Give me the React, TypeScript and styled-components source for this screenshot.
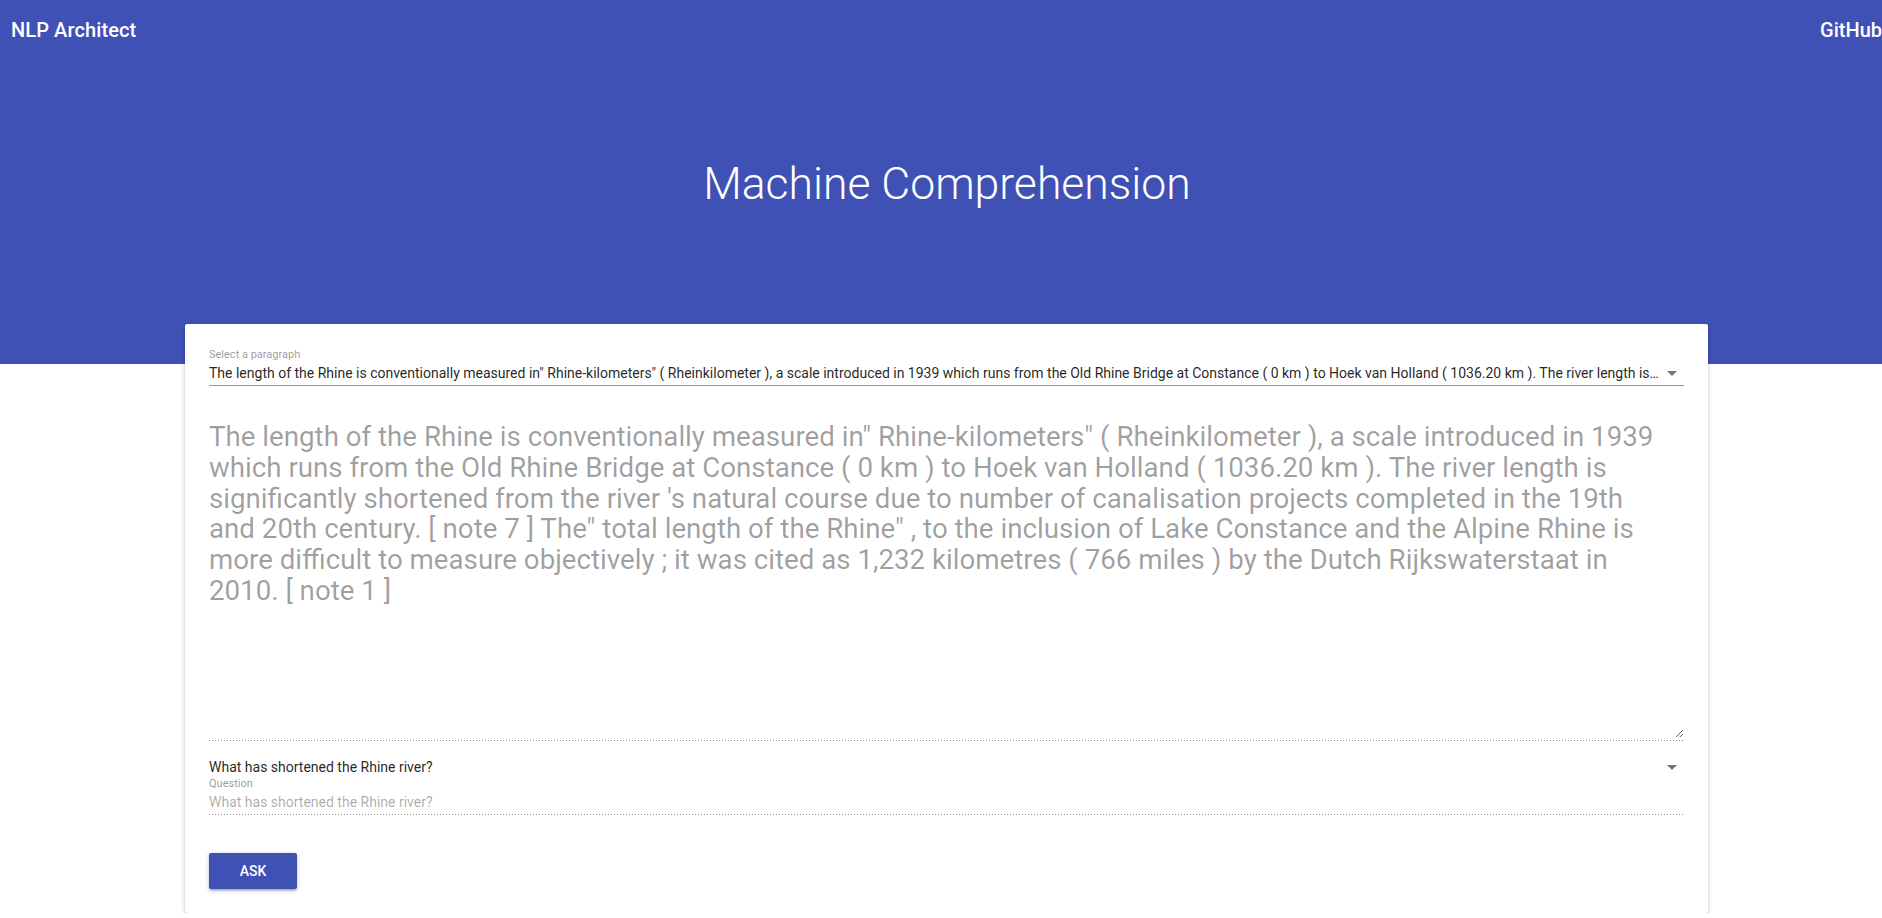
import React from "react";
import styled, { createGlobalStyle } from "styled-components";

const GlobalStyle = createGlobalStyle`
  html, body { margin: 0; padding: 0; overflow: hidden; background: #fff; }
  body { font-family: Roboto, "Noto Sans", sans-serif; }
`;

const PARAGRAPH =
  "The length of the Rhine is conventionally measured in\" Rhine-kilometers\" ( Rheinkilometer ), a scale introduced in 1939 which runs from the Old Rhine Bridge at Constance ( 0 km ) to Hoek van Holland ( 1036.20 km ). The river length is significantly shortened from the river 's natural course due to number of canalisation projects completed in the 19th and 20th century. [ note 7 ] The\" total length of the Rhine\" , to the inclusion of Lake Constance and the Alpine Rhine is more difficult to measure objectively ; it was cited as 1,232 kilometres ( 766 miles ) by the Dutch Rijkswaterstaat in 2010. [ note 1 ]";

const QUESTION = "What has shortened the Rhine river?";

const Hero = styled.header`
  background: #3f51b5;
  height: 364px;
  display: flex;
  flex-direction: column;
  color: #fff;
`;

const Toolbar = styled.div`
  height: 60px;
  display: flex;
  align-items: center;
  justify-content: space-between;
  padding-left: 11px;
`;

const Brand = styled.div`
  font-size: 20px;
  font-weight: 500;
  letter-spacing: 0.1px;
`;

const NavLink = styled.a`
  font-size: 20px;
  font-weight: 500;
  color: #fff;
  text-decoration: none;
`;

const Title = styled.h1`
  margin: 98px 0 0;
  text-align: center;
  font-size: 44.5px;
  font-weight: 300;
  line-height: 52px;
  padding-left: 12px;
`;

const Card = styled.main`
  margin: -40px 0 0 185px;
  width: 1523px;
  box-sizing: border-box;
  padding: 24px;
  background: #fff;
  border-radius: 2px;
  box-shadow: 0px 1px 5px 0px rgba(0, 0, 0, 0.2), 0px 2px 2px 0px rgba(0, 0, 0, 0.14),
    0px 3px 1px -2px rgba(0, 0, 0, 0.12);
  display: flex;
  flex-direction: column;
`;

const FieldLabel = styled.label`
  display: block;
  font-size: 11px;
  line-height: 13px;
  color: rgba(0, 0, 0, 0.42);
`;

const SelectRow = styled.div<{ $underline?: boolean }>`
  position: relative;
  height: ${(p) => (p.$underline ? "24px" : "20px")};
  display: flex;
  align-items: center;
  border-bottom: ${(p) => (p.$underline ? "1px solid rgba(0, 0, 0, 0.42)" : "none")};
`;

const SelectValue = styled.div`
  flex: 1;
  min-width: 0;
  padding-right: 24px;
  font-size: 14px;
  color: rgba(0, 0, 0, 0.87);
  white-space: nowrap;
  overflow: hidden;
  text-overflow: ellipsis;
`;

const Arrow = styled.svg`
  position: absolute;
  right: 0;
  top: 50%;
  margin-top: -12px;
  width: 24px;
  height: 24px;
  fill: rgba(0, 0, 0, 0.54);
`;

const DottedField = styled.div`
  padding-bottom: 3px;
  background-image: linear-gradient(to right, rgba(0, 0, 0, 0.42) 33%, transparent 0%);
  background-position: left bottom;
  background-size: 3px 1px;
  background-repeat: repeat-x;
`;

const TextArea = styled.textarea`
  display: block;
  width: 100%;
  height: 316px;
  margin: 36px 0 0;
  padding: 0 11px 0 0;
  border: none;
  outline: none;
  resize: vertical;
  font-family: Roboto, sans-serif;
  font-size: 27.7px;
  line-height: 30.75px;
  color: rgba(0, 0, 0, 0.38);
  background: transparent;
  box-sizing: border-box;
`;

const QuestionBlock = styled.div`
  margin-top: 16px;
  display: flex;
  flex-direction: column;
`;

const Input = styled.input`
  display: block;
  width: 100%;
  height: 21px;
  margin-top: 1px;
  padding: 0;
  border: none;
  outline: none;
  font-family: Roboto, sans-serif;
  font-size: 14px;
  background: transparent;
  &::placeholder {
    color: rgba(0, 0, 0, 0.34);
  }
`;

const AskButton = styled.button`
  margin-top: 38px;
  align-self: flex-start;
  min-width: 88px;
  height: 36px;
  border: none;
  border-radius: 2px;
  background: #3f51b5;
  color: #fff;
  font-family: Roboto, sans-serif;
  font-size: 14px;
  font-weight: 500;
  text-transform: uppercase;
  box-shadow: 0px 1px 5px 0px rgba(0, 0, 0, 0.2), 0px 2px 2px 0px rgba(0, 0, 0, 0.14),
    0px 3px 1px -2px rgba(0, 0, 0, 0.12);
  cursor: pointer;
`;

const DropIcon = () => (
  <Arrow viewBox="0 0 24 24">
    <path d="M7 10l5 5 5-5z" />
  </Arrow>
);

export default function App() {
  return (
    <>
      <GlobalStyle />
      <Hero>
        <Toolbar>
          <Brand>NLP Architect</Brand>
          <NavLink href="#">GitHub</NavLink>
        </Toolbar>
        <Title>Machine Comprehension</Title>
      </Hero>
      <Card>
        <FieldLabel>Select a paragraph</FieldLabel>
        <SelectRow $underline>
          <SelectValue>{PARAGRAPH}</SelectValue>
          <DropIcon />
        </SelectRow>
        <DottedField>
          <TextArea readOnly value={PARAGRAPH} />
        </DottedField>
        <QuestionBlock>
          <SelectRow>
            <SelectValue>{QUESTION}</SelectValue>
            <DropIcon />
          </SelectRow>
          <FieldLabel>Question</FieldLabel>
          <DottedField>
            <Input placeholder={QUESTION} />
          </DottedField>
        </QuestionBlock>
        <AskButton>Ask</AskButton>
      </Card>
    </>
  );
}
